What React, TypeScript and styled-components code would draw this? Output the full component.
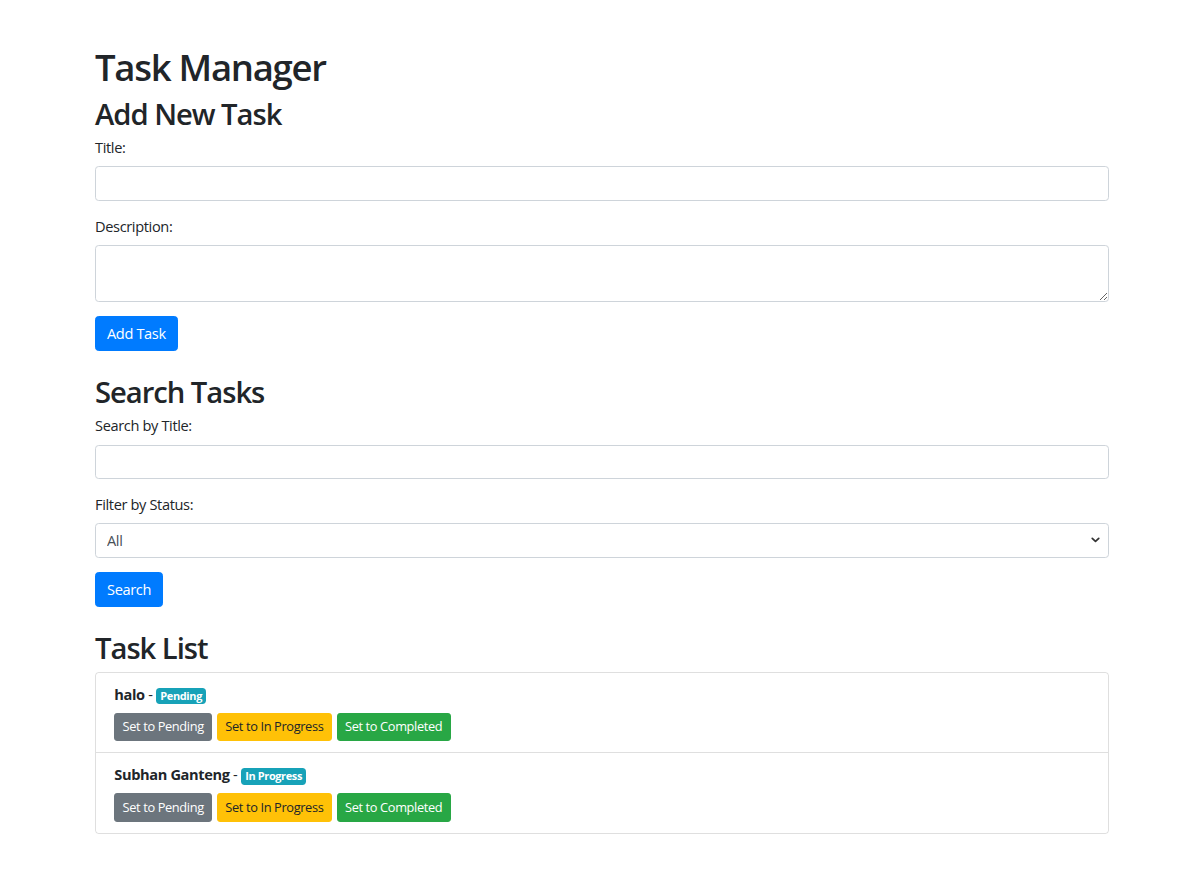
import React from "react";
import styled, { createGlobalStyle } from "styled-components";

const GlobalStyle = createGlobalStyle`
  html, body { margin: 0; padding: 0; background: #fff; }
  body {
    font-family: "Open Sans", "Noto Sans", "Liberation Sans", sans-serif;
    font-size: 14.6px;
    line-height: 1.5;
    letter-spacing: -0.025em;
    color: #212529;
  }
  * { box-sizing: border-box; }
  input, textarea, select, button { letter-spacing: inherit; }
`;

const Container = styled.div`
  width: 1014px;
  margin-left: 95px;
  padding-top: 43.8px;
  padding-bottom: 40px;
`;

const Title = styled.h1`
  margin: 0 0 5.3px;
  padding-top: 2px;
  font-size: 36.5px;
  font-weight: 600;
  line-height: 1.2;
  letter-spacing: -0.035em;
`;

const Heading = styled.h2<{ $top?: boolean }>`
  margin: ${(p) => (p.$top ? "22px" : "0")} 0 5.3px;
  padding-top: 2px;
  font-size: 29.2px;
  font-weight: 600;
  line-height: 1.2;
  letter-spacing: -0.035em;
`;

const FormGroup = styled.div`
  margin-bottom: 14.6px;
`;

const Label = styled.label`
  display: block;
  margin-bottom: 7.3px;
  line-height: 21.9px;
`;

const Input = styled.input`
  display: block;
  width: 100%;
  height: 34.7px;
  padding: 5.5px 11px;
  font: inherit;
  color: #495057;
  background: #fff;
  border: 1px solid #ced4da;
  border-radius: 3.65px;
  outline: none;
`;

const TextArea = styled.textarea`
  display: block;
  width: 100%;
  height: 56.6px;
  padding: 5.5px 11px;
  font: inherit;
  color: #495057;
  background: #fff;
  border: 1px solid #ced4da;
  border-radius: 3.65px;
  outline: none;
  resize: vertical;
`;

const SelectWrap = styled.div`
  position: relative;
`;

const Select = styled.select`
  display: block;
  width: 100%;
  height: 34.7px;
  padding: 5.5px 11px;
  font: inherit;
  color: #495057;
  background: #fff;
  border: 1px solid #ced4da;
  border-radius: 3.65px;
  outline: none;
  appearance: none;
  -webkit-appearance: none;
`;

const Chevron = styled.svg`
  position: absolute;
  right: 9px;
  top: 50%;
  transform: translateY(-50%);
  pointer-events: none;
`;

const PrimaryButton = styled.button`
  display: inline-block;
  padding: 5.5px 11px;
  font: inherit;
  line-height: 1.5;
  color: #fff;
  background: #007bff;
  border: 1px solid #007bff;
  border-radius: 3.65px;
  cursor: pointer;
`;

const ListGroup = styled.ul`
  margin: 0;
  padding: 0;
  list-style: none;
  border: 1px solid rgba(0, 0, 0, 0.125);
  border-radius: 3.65px;
`;

const ListItem = styled.li`
  padding: 11px 18.3px;
  & + & {
    border-top: 1px solid rgba(0, 0, 0, 0.125);
  }
`;

const ItemHeader = styled.div`
  margin-bottom: 7.3px;
  line-height: 21.9px;
`;

const ItemName = styled.strong`
  font-weight: 700;
`;

const Badge = styled.span`
  display: inline-block;
  padding: 2.74px 4.4px;
  font-size: 10.96px;
  font-weight: 700;
  line-height: 1;
  color: #fff;
  background: #17a2b8;
  border-radius: 3.65px;
  vertical-align: baseline;
`;

const ButtonRow = styled.div`
  display: flex;
  gap: 5px;
`;

const variants: Record<string, { bg: string; fg: string }> = {
  secondary: { bg: "#6c757d", fg: "#fff" },
  warning: { bg: "#ffc107", fg: "#212529" },
  success: { bg: "#28a745", fg: "#fff" },
};

const SmallButton = styled.button<{ $variant: string }>`
  height: 28.5px;
  padding: 3.65px 7.3px;
  font: inherit;
  font-size: 12.8px;
  line-height: 1.5;
  color: ${(p) => variants[p.$variant].fg};
  background: ${(p) => variants[p.$variant].bg};
  border: 1px solid ${(p) => variants[p.$variant].bg};
  border-radius: 2.9px;
  cursor: pointer;
`;

const tasks = [
  { title: "halo", status: "Pending" },
  { title: "Subhan Ganteng", status: "In Progress" },
];

export default function App() {
  return (
    <>
      <GlobalStyle />
      <Container>
        <Title>Task Manager</Title>
        <Heading>Add New Task</Heading>
        <form onSubmit={(e) => e.preventDefault()}>
          <FormGroup>
            <Label>Title:</Label>
            <Input type="text" />
          </FormGroup>
          <FormGroup>
            <Label>Description:</Label>
            <TextArea rows={2} />
          </FormGroup>
          <PrimaryButton type="submit">Add Task</PrimaryButton>
        </form>

        <Heading $top>Search Tasks</Heading>
        <form onSubmit={(e) => e.preventDefault()}>
          <FormGroup>
            <Label>Search by Title:</Label>
            <Input type="text" />
          </FormGroup>
          <FormGroup>
            <Label>Filter by Status:</Label>
            <SelectWrap>
              <Select defaultValue="All">
                <option>All</option>
                <option>Pending</option>
                <option>In Progress</option>
                <option>Completed</option>
              </Select>
              <Chevron width="9" height="6" viewBox="0 0 10 7">
                <path d="M1.2 1.5 L5 5.2 L8.8 1.5" fill="none" stroke="#333" strokeWidth="2" strokeLinecap="round" strokeLinejoin="round" />
              </Chevron>
            </SelectWrap>
          </FormGroup>
          <PrimaryButton type="submit">Search</PrimaryButton>
        </form>

        <Heading $top>Task List</Heading>
        <ListGroup>
          {tasks.map((t) => (
            <ListItem key={t.title}>
              <ItemHeader>
                <ItemName>{t.title}</ItemName> - <Badge>{t.status}</Badge>
              </ItemHeader>
              <ButtonRow>
                <SmallButton $variant="secondary">Set to Pending</SmallButton>
                <SmallButton $variant="warning">Set to In Progress</SmallButton>
                <SmallButton $variant="success">Set to Completed</SmallButton>
              </ButtonRow>
            </ListItem>
          ))}
        </ListGroup>
      </Container>
    </>
  );
}
